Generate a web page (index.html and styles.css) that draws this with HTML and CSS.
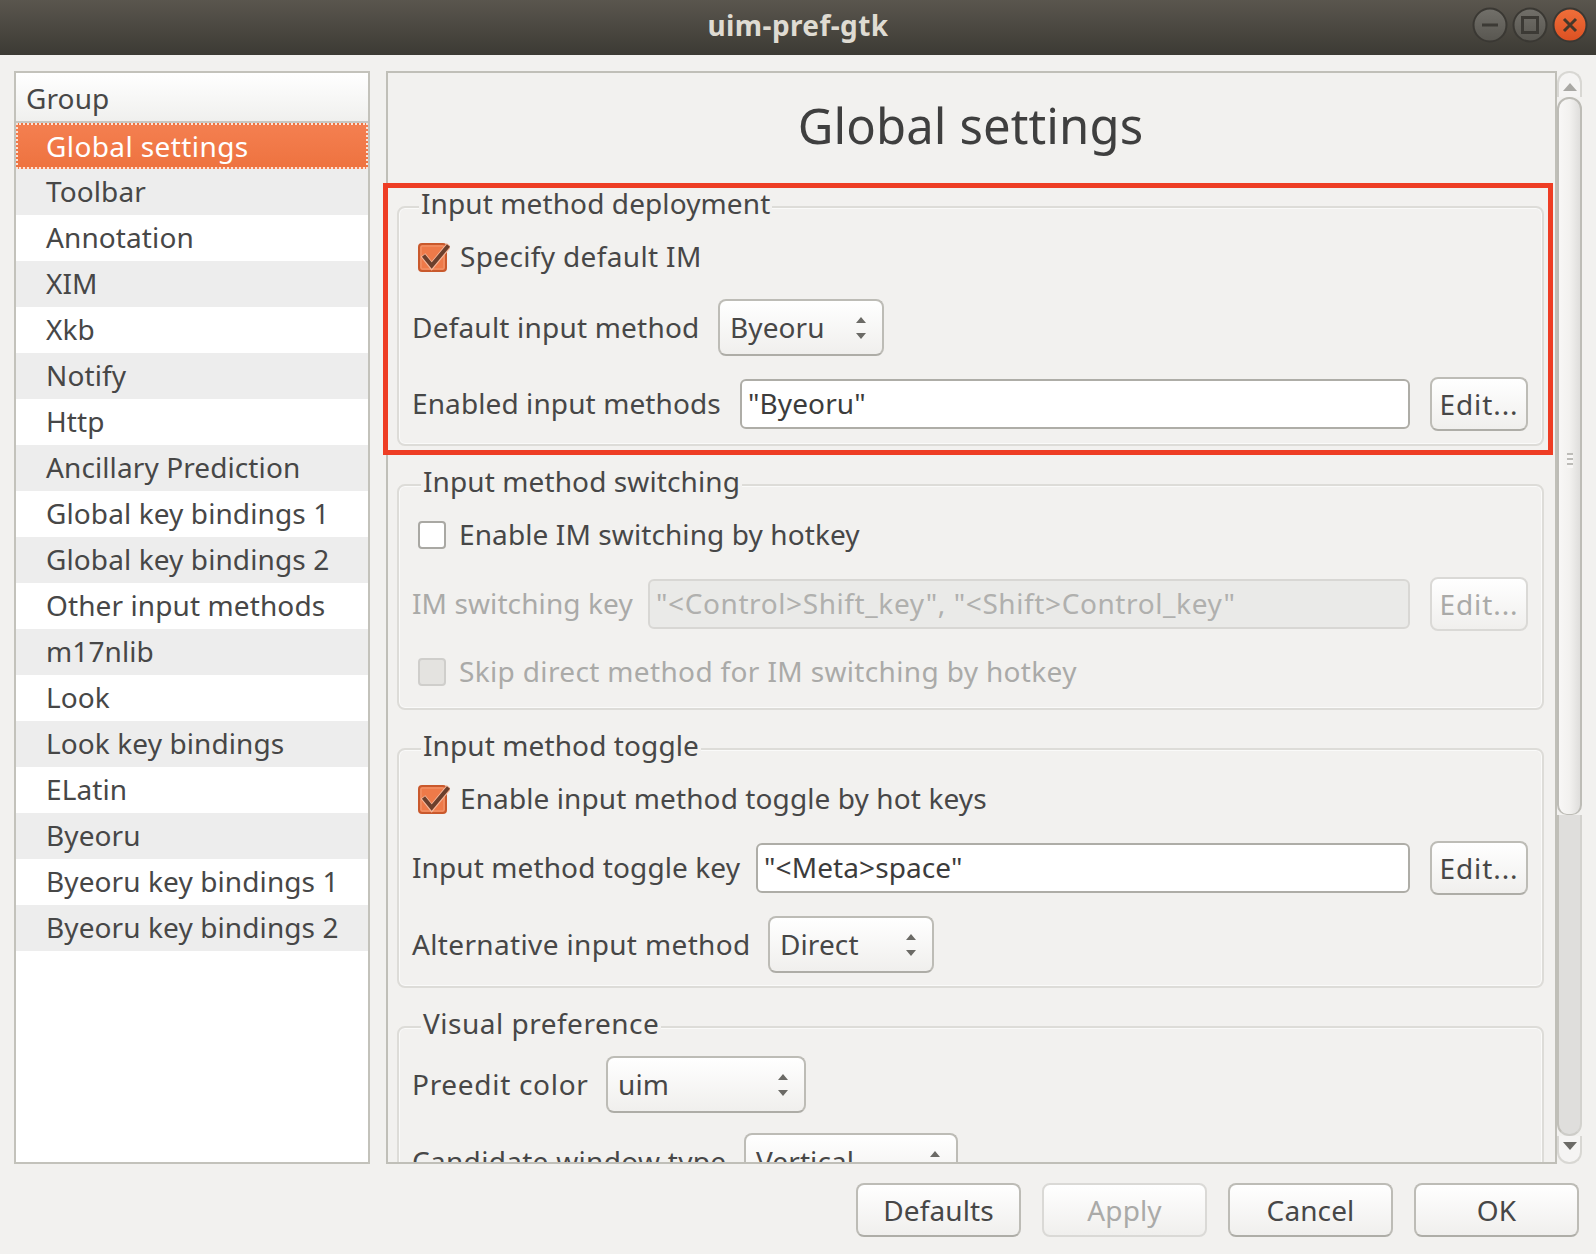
FILE: index.html
```html
<!DOCTYPE html>
<html lang="en">
<head>
    <meta charset="UTF-8">
    <title>uim-pref-gtk</title>
    <link rel="stylesheet" href="styles.css">
</head>
<body>
<div class="window">
    <div class="titlebar">
        <span></span>
        <span class="title">uim-pref-gtk</span>
        <div class="wm-buttons">
            <svg width="36" height="36" viewBox="0 0 36 36"><defs><linearGradient id="wmGrey" x1="0" y1="0" x2="0" y2="1"><stop offset="0" stop-color="#72706a"/><stop offset="1" stop-color="#585650"/></linearGradient><linearGradient id="wmRed" x1="0" y1="0" x2="0" y2="1"><stop offset="0" stop-color="#f06f3a"/><stop offset="1" stop-color="#dc5022"/></linearGradient></defs><circle cx="18" cy="18" r="16.5" fill="url(#wmGrey)" stroke="#3a3833" stroke-width="2"/><path d="M10 18h16" stroke="#3c3a35" stroke-width="3"/></svg>
            <svg width="36" height="36" viewBox="0 0 36 36"><circle cx="18" cy="18" r="16.5" fill="url(#wmGrey)" stroke="#3a3833" stroke-width="2"/><rect x="10.5" y="10.5" width="15" height="15" fill="none" stroke="#3c3a35" stroke-width="3"/></svg>
            <svg width="36" height="36" viewBox="0 0 36 36"><circle cx="18" cy="18" r="16.5" fill="url(#wmRed)" stroke="#3a3833" stroke-width="2"/><path d="M12 12l12 12M24 12l-12 12" stroke="#46382a" stroke-width="3"/></svg>
        </div>
    </div>

    <div class="content">
        <div class="sidebar">
            <div class="sidebar-head">Group</div>
            <div class="item selected">Global settings</div>
            <div class="item alt">Toolbar</div>
            <div class="item">Annotation</div>
            <div class="item alt">XIM</div>
            <div class="item">Xkb</div>
            <div class="item alt">Notify</div>
            <div class="item">Http</div>
            <div class="item alt">Ancillary Prediction</div>
            <div class="item">Global key bindings 1</div>
            <div class="item alt">Global key bindings 2</div>
            <div class="item">Other input methods</div>
            <div class="item alt">m17nlib</div>
            <div class="item">Look</div>
            <div class="item alt">Look key bindings</div>
            <div class="item">ELatin</div>
            <div class="item alt">Byeoru</div>
            <div class="item">Byeoru key bindings 1</div>
            <div class="item alt">Byeoru key bindings 2</div>
        </div>

        <div class="panel">
            <h1 class="panel-title">Global settings</h1>

            <div class="group">
                <span class="legend legend-first">Input method deployment</span>
                <div class="check-row">
                    <svg class="check" width="32" height="30" viewBox="0 0 32 30"><rect x="1" y="2" width="27" height="27" rx="3" fill="#ee7a49" stroke="#c9592c" stroke-width="2"/><rect x="3" y="4" width="23" height="23" rx="1" fill="none" stroke="#f39a72"/><path d="M5 13l8.7 11L31 3" fill="none" stroke="#f6b79a" stroke-width="6"/><path d="M5.5 13.5l8.2 10L30.5 3.5" fill="none" stroke="#6b3f2c" stroke-width="4"/></svg>
                    <span class="check-text wide-text">Specify default IM</span>
                </div>
                <div class="row">
                    <label class="label w-default">Default input method</label>
                    <div class="combo combo-byeoru"><span>Byeoru</span><svg width="12" height="24" viewBox="0 0 12 24"><path d="M6 1l5 6H1zM6 23l5-6H1z" fill="#6b6a66"/></svg></div>
                </div>
                <div class="row row-wide">
                    <label class="label w-enabled">Enabled input methods</label>
                    <div class="entry">"Byeoru"</div>
                    <div class="btn btn-edit">Edit...</div>
                </div>
            </div>

            <div class="group group-short">
                <span class="legend">Input method switching</span>
                <div class="check-row">
                    <span class="box"></span>
                    <span class="check-text">Enable IM switching by hotkey</span>
                </div>
                <div class="row off">
                    <label class="label w-switch">IM switching key</label>
                    <div class="entry entry-off">"&lt;Control&gt;Shift_key", "&lt;Shift&gt;Control_key"</div>
                    <div class="btn btn-edit btn-off">Edit...</div>
                </div>
                <div class="check-row check-row-tight off">
                    <span class="box box-off"></span>
                    <span class="check-text wide-text">Skip direct method for IM switching by hotkey</span>
                </div>
            </div>

            <div class="group">
                <span class="legend">Input method toggle</span>
                <div class="check-row">
                    <svg class="check" width="32" height="30" viewBox="0 0 32 30"><rect x="1" y="2" width="27" height="27" rx="3" fill="#ee7a49" stroke="#c9592c" stroke-width="2"/><rect x="3" y="4" width="23" height="23" rx="1" fill="none" stroke="#f39a72"/><path d="M5 13l8.7 11L31 3" fill="none" stroke="#f6b79a" stroke-width="6"/><path d="M5.5 13.5l8.2 10L30.5 3.5" fill="none" stroke="#6b3f2c" stroke-width="4"/></svg>
                    <span class="check-text">Enable input method toggle by hot keys</span>
                </div>
                <div class="row">
                    <label class="label w-toggle">Input method toggle key</label>
                    <div class="entry">"&lt;Meta&gt;space"</div>
                    <div class="btn btn-edit">Edit...</div>
                </div>
                <div class="row row-wide">
                    <label class="label w-alt">Alternative input method</label>
                    <div class="combo combo-direct"><span>Direct</span><svg width="12" height="24" viewBox="0 0 12 24"><path d="M6 1l5 6H1zM6 23l5-6H1z" fill="#6b6a66"/></svg></div>
                </div>
            </div>

            <div class="group group-plain">
                <span class="legend legend-last">Visual preference</span>
                <div class="row row-first">
                    <label class="label w-preedit">Preedit color</label>
                    <div class="combo combo-uim"><span>uim</span><svg width="12" height="24" viewBox="0 0 12 24"><path d="M6 1l5 6H1zM6 23l5-6H1z" fill="#6b6a66"/></svg></div>
                </div>
                <div class="row row-cand">
                    <label class="label w-cand">Candidate window type</label>
                    <div class="combo combo-vertical"><span>Vertical</span><svg width="12" height="24" viewBox="0 0 12 24"><path d="M6 1l5 6H1zM6 23l5-6H1z" fill="#6b6a66"/></svg></div>
                </div>
            </div>
        </div>

        <div class="scrollbar">
            <div class="step step-up"><svg width="14" height="8" viewBox="0 0 14 8"><path d="M7 0l7 8H0z" fill="#a9a8a4"/></svg></div>
            <div class="thumb"><span class="grip"></span></div>
            <div class="trough"></div>
            <div class="step step-down"><svg width="14" height="8" viewBox="0 0 14 8"><path d="M7 8l7-8H0z" fill="#6b6a66"/></svg></div>
        </div>
    </div>

    <div class="footer">
        <div class="btn btn-foot">Defaults</div>
        <div class="btn btn-foot btn-off">Apply</div>
        <div class="btn btn-foot">Cancel</div>
        <div class="btn btn-foot">OK</div>
    </div>

    <div class="highlight"></div>
</div>
</body>
</html>
```

FILE: styles.css
```css
* {
    box-sizing: border-box;
}
body {
    margin: 0;
    font-family: "Noto Sans", sans-serif;
    font-size: 28px;
    letter-spacing: 0.1px;
    color: #474747;
    background-color: #f2f1ef;
}
.window {
    position: relative;
    width: 1596px;
    height: 1254px;
    overflow: hidden;
    background-color: #f2f1ef;
}

/* title bar */
.titlebar {
    height: 55px;
    display: grid;
    grid-template-columns: 1fr auto 1fr;
    align-items: center;
    background: linear-gradient(#5a564e, #3c3a34);
}
.title {
    margin-top: -6px;
    font-weight: bold;
    font-size: 28px;
    letter-spacing: 0.4px;
    color: #dfdbd2;
}
.wm-buttons {
    display: flex;
    justify-content: flex-end;
    gap: 4px;
    padding-right: 8px;
    margin-top: -5px;
}

/* main area */
.content {
    display: flex;
    height: 1093px;
    margin-top: 16px;
    padding-left: 14px;
}
.sidebar {
    width: 356px;
    margin-right: 16px;
    border: 2px solid #c3c2bb;
    background-color: #fff;
}
.sidebar-head {
    height: 50px;
    padding-left: 10px;
    line-height: 50px;
    border-bottom: 2px solid #c8c7c2;
    background: linear-gradient(#fff, #f0f0ee);
}
.item {
    height: 46px;
    line-height: 44px;
    padding-left: 30px;
}
.item.alt {
    background-color: #ededed;
}
.item.selected {
    color: #fff;
    border: 2px dotted #fbe3d8;
    padding-left: 28px;
    line-height: 42px;
    letter-spacing: 0.4px;
    background: linear-gradient(#f47f50, #ee7340);
}

.panel {
    width: 1171px;
    padding: 0 11px 0 9px;
    border: 2px solid #c0bfb8;
    overflow: hidden;
}
.panel-title {
    height: 133px;
    margin: 0;
    padding-top: 16px;
    font-size: 49px;
    font-weight: normal;
    line-height: 72px;
    text-align: center;
    color: #3f3f3f;
}

/* frames */
.group {
    position: relative;
    margin-bottom: 38px;
    padding: 22px 14px 13px 13px;
    border: 2px solid #dddcd8;
    border-radius: 8px;
    box-shadow: inset 0 0 0 1px #fafaf9;
}
.group-short {
    padding-bottom: 9px;
}
.group-plain {
    padding-top: 28px;
}
.legend {
    position: absolute;
    top: -25px;
    left: 22px;
    padding: 0 2px;
    line-height: 40px;
    background-color: #f2f1ef;
}
.legend-first {
    left: 20px;
}
.legend-last {
    letter-spacing: 0.5px;
}

/* rows */
.row,
.check-row {
    display: flex;
    align-items: center;
}
.row {
    min-height: 54px;
    margin-top: 15px;
}
.row-wide {
    margin-top: 21px;
}
.row-cand {
    margin-top: 20px;
}
.row-first {
    margin-top: 0;
}
.check-row {
    height: 54px;
    padding-left: 6px;
    gap: 11px;
}
.check-row-tight {
    margin-top: 14px;
}
.check-text {
    margin-top: -2px;
}
.wide-text {
    letter-spacing: 0.35px;
}
.check {
    flex: none;
    margin-right: -1px;
}
.box {
    flex: none;
    width: 28px;
    height: 28px;
    margin-right: 2px;
    border: 2px solid #a9a8a3;
    border-radius: 4px;
    background-color: #fff;
}
.box-off {
    border-color: #cfcecb;
    background-color: #e4e3e0;
}
.off {
    color: #aaaaa8;
}

.label {
    flex: none;
    margin-top: -2px;
}
.w-default { width: 306px; letter-spacing: 0.2px; }
.w-enabled { width: 328px; }
.w-switch { width: 236px; }
.w-toggle { width: 344px; }
.w-alt { width: 356px; letter-spacing: 0.35px; }
.w-preedit { width: 194px; letter-spacing: 0.7px; }
.w-cand { width: 332px; letter-spacing: 0.3px; }

/* controls */
.entry {
    flex: 1;
    height: 50px;
    padding-left: 6px;
    line-height: 44px;
    color: #3c3c3c;
    background-color: #fff;
    border: 2px solid #aeada7;
    border-radius: 6px;
}
.entry-off {
    letter-spacing: 0.6px;
    color: #b0b0ae;
    background-color: #eaeae8;
    border-color: #d8d7d4;
}
.combo {
    display: flex;
    align-items: center;
    justify-content: space-between;
    height: 57px;
    padding: 0 15px 0 10px;
    border: 2px solid #bdbcb6;
    border-bottom-color: #aeada7;
    border-radius: 8px;
    background: linear-gradient(#fff, #f0efed);
}
.combo span {
    margin-top: -1px;
}
.combo-byeoru,
.combo-direct { width: 166px; }
.combo-uim { width: 200px; }
.combo-vertical { width: 214px; }

.btn {
    height: 54px;
    line-height: 50px;
    text-align: center;
    border: 2px solid #bdbcb6;
    border-bottom-color: #aeada7;
    border-radius: 8px;
    background: linear-gradient(#fff, #f0efed);
}
.btn-edit {
    flex: none;
    width: 98px;
    margin-left: 20px;
    letter-spacing: 0.9px;
}
.btn-foot {
    width: 165px;
}
.btn-off {
    color: #aaaaa8;
    border-color: #dad9d6;
}

/* scrollbar */
.scrollbar {
    display: flex;
    flex-direction: column;
    width: 25px;
    height: 1093px;
}
.step {
    flex: none;
    display: flex;
    justify-content: center;
    background-color: #f5f4f3;
    border: 2px solid #d8d7d3;
}
.step-up {
    height: 26px;
    padding-top: 10px;
    border-bottom: 0;
    border-radius: 12px 12px 0 0;
}
.step-down {
    height: 28px;
    padding-top: 6px;
    border-top: 0;
    border-radius: 0 0 12px 12px;
}
.thumb {
    flex: none;
    display: flex;
    align-items: center;
    justify-content: center;
    height: 718px;
    border: 2px solid #bdbcb6;
    border-bottom-width: 1px;
    border-radius: 12px 12px 10px 10px;
    background: linear-gradient(to right, #f8f7f6, #f2f1ef 50%, #dfdedc);
}
.grip {
    width: 6px;
    height: 15px;
    margin-top: 8px;
    background: repeating-linear-gradient(#bdbcb8 0, #bdbcb8 2px, #f7f6f5 2px, #f7f6f5 5px);
}
.trough {
    flex: 1;
    border-left: 2px solid #c0bfb8;
    border-right: 2px solid #d3d2ce;
    border-bottom: 2px solid #cdccc8;
    border-radius: 0 0 12px 12px;
    background-color: #dfdedc;
}

.footer {
    display: flex;
    justify-content: flex-end;
    gap: 21px;
    padding: 19px 17px 0 0;
}

/* red annotation frame */
.highlight {
    position: absolute;
    left: 383px;
    top: 183px;
    width: 1170px;
    height: 272px;
    border: 5px solid #ee3d24;
}
```
